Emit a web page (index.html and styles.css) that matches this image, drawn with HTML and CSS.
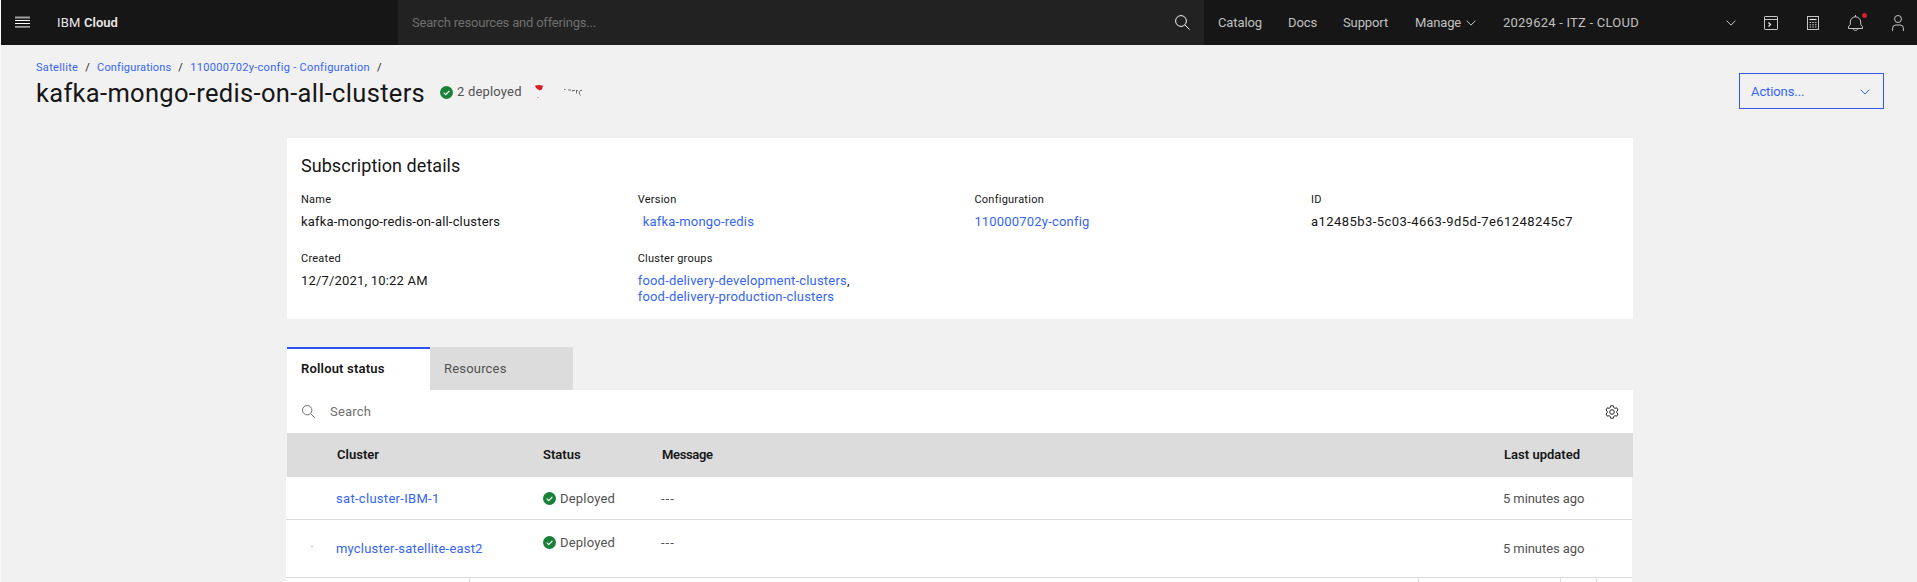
FILE: index.html
```html
<!DOCTYPE html>
<html lang="en">
<head>
<meta charset="utf-8">
<title>Satellite subscription</title>
<link rel="stylesheet" href="styles.css">
</head>
<body>
<header class="header">
  <svg class="menu" width="15" height="13" viewBox="0 0 15 13"><path class="dim" d="M0 1.500h15M0 10.900h15"/><path d="M0 4.500h15M0 7.500h15"/></svg>
  <div class="brand">IBM <b>Cloud</b></div>
  <div class="find"><span class="find-text">Search resources and offerings...</span>
    <svg class="lens" width="15" height="15" viewBox="0 0 15 15"><circle cx="6" cy="6" r="5.4"/><path d="M10 10l4.6 4.6"/></svg>
  </div>
  <nav class="nav">
    <a class="catalog">Catalog</a><a class="docs">Docs</a><a class="support">Support</a><a class="manage">Manage</a>
    <svg class="chev" width="10" height="6" viewBox="0 0 10 6"><path d="M.6.7L5 5.1 9.4.7"/></svg>
    <a class="account">2029624 - ITZ - CLOUD</a>
    <svg class="chev" width="10" height="6" viewBox="0 0 10 6"><path d="M.6.7L5 5.1 9.4.7"/></svg>
  </nav>
  <div class="tools">
    <svg width="14" height="14" viewBox="0 0 14 14"><rect x=".5" y=".5" width="13" height="13" rx=".6"/><path d="M0 3.5h14"/><path class="bright" d="M4.500 6.500l2 2-2 2"/></svg>
    <svg width="12" height="14" viewBox="0 0 12 14"><rect x=".5" y=".5" width="11" height="13"/><path class="bright" d="M2.500 3.500h7"/><path d="M2.500 6.500h7M2.500 8.800h7M2.500 11h7" stroke-dasharray="1.600 1.100"/></svg>
    <span class="bell"><svg width="15" height="16" viewBox="0 0 15 16"><path d="M7.500 0v2M.5 13.500v-1.800L2.300 9.500V7a5.200 5.200 0 0 1 10.400 0v2.500l1.800 2.200v1.800zM5 13.500c.3 2.600 4.700 2.600 5 0"/></svg><i></i></span>
    <svg width="12" height="16" viewBox="0 0 12 16"><circle cx="6" cy="4" r="3.500"/><path d="M.6 16v-2.800a3.200 3.200 0 0 1 3.200-3.200h4.400a3.200 3.200 0 0 1 3.200 3.200V16"/></svg>
  </div>
</header>

<section class="pagehead">
  <div>
    <div class="crumbs"><a class="c1">Satellite</a><i>/</i><a class="c2">Configurations</a><i>/</i><a class="c3">110000702y-config - Configuration</a><i>/</i></div>
    <div class="titlerow">
      <h1>kafka-mongo-redis-on-all-clusters</h1>
      <svg class="ok" viewBox="0 0 13 13"><circle cx="6.500" cy="6.500" r="6.500"/><path d="M3.700 6.700l2 2 3.700-3.800"/></svg>
      <span class="count">2 deployed</span>
      <svg class="remnant" width="50" height="14" viewBox="0 0 50 14"><path fill="#da1e28" d="M0 .8Q4 -.8 8 .8L7 4.500 4.500 5.600 1 3z"/><path fill="#e9a0a4" d="M2 12h2v1H2z"/><path class="scrap" d="M29 4.500h1.500M33 5h3M37.500 5v1.500M38 5.500h2M41.500 5v3.500M41.500 5.500h1.500M47 5.500c-3-1-3.500 3-1.500 5"/></svg>
    </div>
  </div>
  <button class="actions"><span>Actions...</span><svg width="10" height="6" viewBox="0 0 10 6"><path d="M.6.7L5 5.100 9.400.7"/></svg></button>
</section>

<main class="main">
  <section class="card">
    <h2>Subscription details</h2>
    <dl class="grid">
      <div><dt>Name</dt><dd>kafka-mongo-redis-on-all-clusters</dd></div>
      <div><dt>Version</dt><dd class="inset"><a>kafka-mongo-redis</a></dd></div>
      <div><dt>Configuration</dt><dd><a>110000702y-config</a></dd></div>
      <div><dt>ID</dt><dd class="uuid">a12485b3-5c03-4663-9d5d-7e61248245c7</dd></div>
      <div><dt>Created</dt><dd class="date">12/7/2021, 10:22 AM</dd></div>
      <div><dt>Cluster groups</dt><dd><a>food-delivery-development-clusters</a>,<br><a>food-delivery-production-clusters</a></dd></div>
    </dl>
  </section>

  <div class="tabs"><div class="tab on">Rollout status</div><div class="tab">Resources</div></div>
  <div class="toolbar">
    <svg width="13" height="13" viewBox="0 0 13 13"><circle cx="5.200" cy="5.200" r="4.700"/><path d="M8.700 8.700l4 4"/></svg>
    <span>Search</span>
    <svg class="gear" width="14" height="14" viewBox="0 0 14 14"><circle cx="7" cy="7" r="2.300"/><path d="M5.700 .8h2.600l.4 1.700 1.300.8 1.700-.5 1.300 2.200-1.200 1.200v1.600l1.200 1.200-1.300 2.200-1.700-.5-1.300.8-.4 1.700H5.700l-.4-1.700-1.300-.8-1.700.5L1 9l1.200-1.200V6.200L1 5l1.300-2.200 1.700.5 1.300-.8z"/></svg>
  </div>
  <div class="row thead"><span></span><b>Cluster</b><b>Status</b><b class="msg">Message</b><b>Last updated</b></div>
  <div class="rows">
    <div class="row r1"><span></span><a class="l1">sat-cluster-IBM-1</a><span class="st"><svg class="ok" viewBox="0 0 13 13"><circle cx="6.500" cy="6.500" r="6.500"/><path d="M3.700 6.700l2 2 3.700-3.800"/></svg>Deployed</span><span class="dash">---</span><span class="ago">5 minutes ago</span></div>
    <div class="row r2"><span class="speck"></span><a class="l2">mycluster-satellite-east2</a><span class="st up"><svg class="ok" viewBox="0 0 13 13"><circle cx="6.500" cy="6.500" r="6.500"/><path d="M3.700 6.700l2 2 3.700-3.800"/></svg>Deployed</span><span class="dash up">---</span><span class="ago">5 minutes ago</span></div>
    <div class="next"><i></i><i></i><i></i><i></i><i></i></div>
  </div>
</main>
</body>
</html>
```

FILE: styles.css
```css
* { box-sizing: border-box; margin: 0; padding: 0; }
body { width: 1917px; height: 582px; overflow: hidden; background: #f1f1f1; border-left: 1px solid #fafafa; font-family: Roboto, sans-serif; font-size: 13px; line-height: 16px; letter-spacing: .19px; color: #161616; }
svg { display: block; flex: none; fill: none; stroke: currentColor; }
a { color: #3565f6; white-space: nowrap; }
i { font-style: normal; }
b { font-weight: 600; letter-spacing: .02px; }
.header { display: flex; align-items: center; height: 45px; background: #161616; color: #c6c6c6; }
.menu { margin-left: 14px; color: #fff; }
.menu path { stroke-width: 1.2; }
.menu .dim { stroke: #a0a0a0; stroke-width: 1.8; }
.brand { margin-left: 27px; width: 341px; color: #e8e8e8; white-space: nowrap; }
.find { display: flex; align-items: center; justify-content: space-between; width: 806px; height: 45px; padding: 0 14px; background: #222; color: #6f6f6f; }
.find-text { letter-spacing: -.2px; }
.lens { color: #f0f0f0; }
.nav { display: flex; align-items: center; margin-left: 14px; width: 546px; }
.nav a { color: #c0c0c0; letter-spacing: -.12px; }
.catalog { width: 70px; }
.docs { width: 55px; }
.support { width: 72px; }
.manage { width: 51px; }
.nav .account { width: 250px; padding-left: 27px; letter-spacing: .23px; }
.tools { display: flex; align-items: center; gap: 29px; }
.tools .bright { stroke: #eee; stroke-width: 1.2; }
.bell { position: relative; }
.bell i { position: absolute; right: -4px; top: -2px; width: 5px; height: 5px; border-radius: 50%; background: #da1e28; }
.pagehead { display: flex; justify-content: space-between; height: 93px; padding: 15px 33px 0 35px; }
.crumbs { display: flex; height: 16px; font-size: 11px; letter-spacing: .31px; }
.crumbs i { margin: 0 7px; }
.c2 { letter-spacing: .16px; }
.titlerow { display: flex; align-items: center; height: 32px; color: #525252; }
h1 { width: 389px; padding-top: 1px; font-size: 25.500px; letter-spacing: .32px; line-height: 32px; font-weight: 400; color: #161616; white-space: nowrap; }
.ok { width: 13px; height: 13px; }
.ok circle { fill: #198038; stroke: none; }
.ok path { stroke: #fff; stroke-width: 1.2; }
.titlerow .ok { margin-left: 15px; }
.count { width: 78px; margin-left: 4px; }
.remnant { stroke: none; }
.scrap { stroke: #6f6f6f; }
.actions { display: flex; align-items: center; justify-content: space-between; width: 145px; height: 36px; margin-top: 13px; padding: 1px 13px 0 11px; border: 1px solid #3757e8; background: none; color: #3565f6; font: inherit; letter-spacing: -.1px; }
.main { width: 1346px; margin-left: 286px; }
.card { height: 181px; padding: 16px 14px 0; background: #fff; }
h2 { font-size: 18px; line-height: 24px; letter-spacing: .05px; font-weight: 400; }
.grid { display: grid; grid-template-columns: repeat(4, 336.700px); grid-auto-rows: 59px; margin-top: 14px; }
dt { font-size: 11px; line-height: 16px; letter-spacing: .25px; }
dd { margin-top: 6px; white-space: nowrap; }
.uuid { letter-spacing: .43px; }
.inset { margin-left: 5px; }
.tabs { display: flex; margin-top: 28px; }
.tab { width: 143px; height: 43px; padding: 14px; background: #dcdcdc; color: #525252; }
.on { padding-top: 12px; border-top: 2px solid #3050f8; background: #fff; color: #161616; font-weight: 600; }
.toolbar { display: flex; align-items: center; height: 43px; padding: 0 14px 0 15px; background: #fff; color: #6f6f6f; }
.toolbar span { margin-left: 15px; flex: 1; }
.gear { color: #262626; }
.row { display: grid; grid-template-columns: 50px 206px 119px 842px 1fr; align-items: center; }
.thead { height: 44px; background: #dcdcdc; }
.thead .msg { letter-spacing: -.35px; }
.rows { margin-left: -1px; width: 1346px; color: #525252; background: #fff; }
.r1 { height: 43px; padding-top: 1px; border-bottom: 1px solid #dcdcdc; }
.r2 { height: 58px; border-bottom: 1px solid #dcdcdc; }
.l1 { letter-spacing: .3px; }
.dash { letter-spacing: 1px; }
.ago { letter-spacing: -.08px; }
.st { display: flex; align-items: center; gap: 4px; margin-left: 1px; }
.up { padding-bottom: 12px; }
.speck::before { content: ""; display: block; width: 2px; height: 1px; margin: -3px 0 0 25px; background: #bbb; }
.next { display: grid; grid-template-columns: 183px 949px 142px 36px 36px; height: 4px; }
.next i + i { border-left: 1px solid #dcdcdc; }
```
